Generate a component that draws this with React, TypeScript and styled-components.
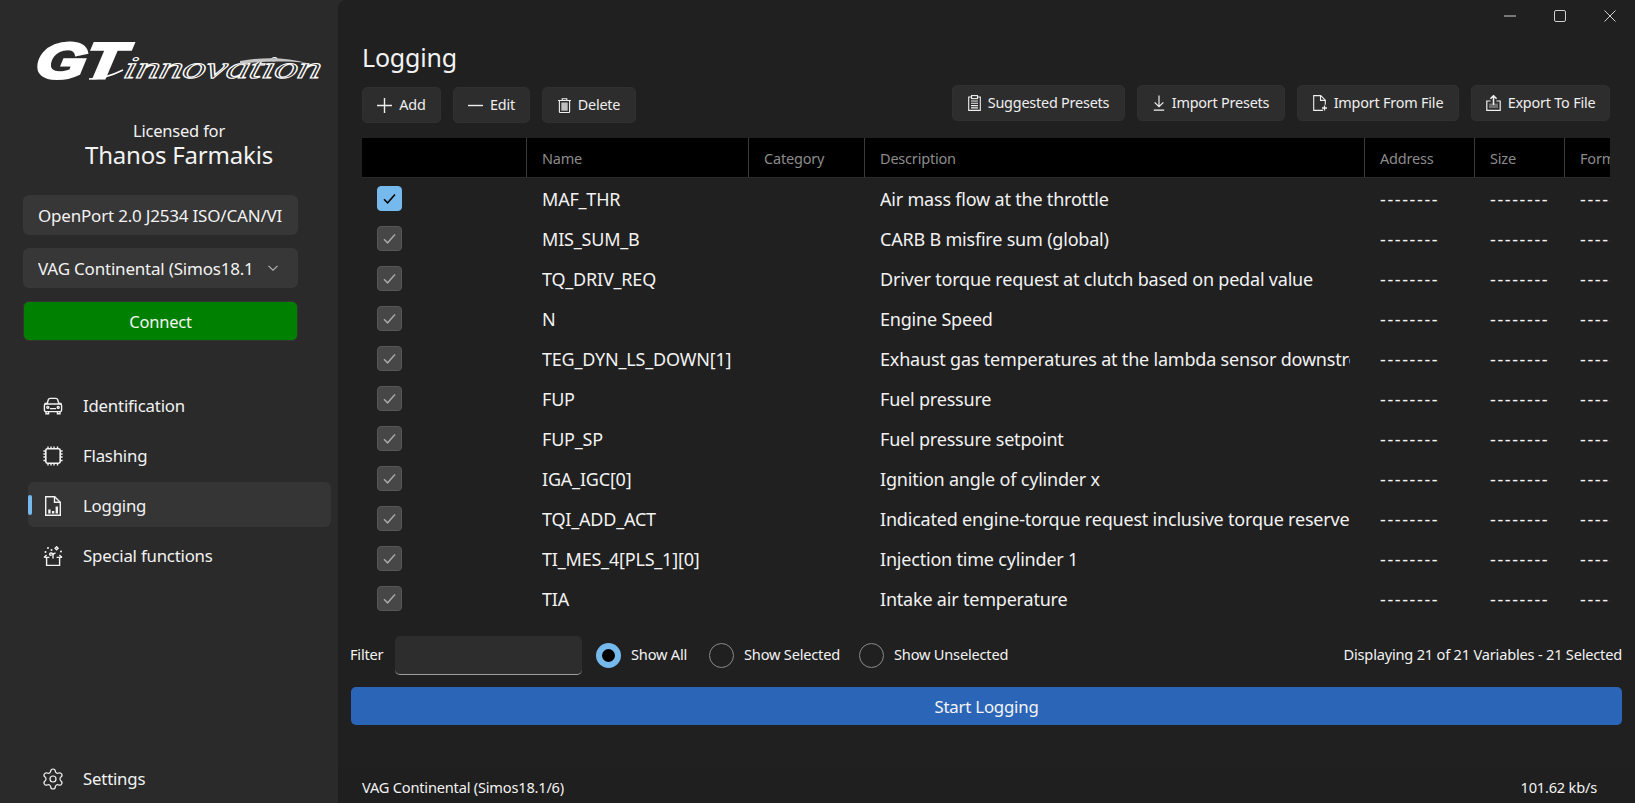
import React from 'react';
import styled, { createGlobalStyle } from 'styled-components';
import { Settings as GearIcon } from 'lucide-react';

const GlobalStyle = createGlobalStyle`
  html, body {
    margin: 0;
    padding: 0;
    height: 100%;
    background: #2a2a2a;
    overflow: hidden;
  }
  body {
    font-family: "Noto Sans", "Open Sans", "Liberation Sans", sans-serif;
    color: #f2f2f2;
    letter-spacing: -0.2px;
  }
  * { box-sizing: border-box; }
`;

const Shell = styled.div`
  display: flex;
  width: 1635px;
  height: 803px;
  background: #2a2a2a;
`;

const Sidebar = styled.aside`
  width: 338px;
  flex: none;
  display: flex;
  flex-direction: column;
  padding-top: 41px;
`;

const LogoBox = styled.div`
  margin-left: 37px;
  height: 40px;
  svg { display: block; overflow: visible; }
`;

const Licensed = styled.div`
  margin-top: 39px;
  text-align: center;
  font-size: 16.5px;
  line-height: 22px;
  padding-left: 20px;
`;

const Licensee = styled.div`
  text-align: center;
  font-size: 24px;
  line-height: 26px;
  padding-left: 20px;
  margin-bottom: 27px;
`;

const Combo = styled.div`
  margin: 0 40px 13px 23px;
  height: 40px;
  background: #373737;
  border-radius: 6px;
  display: flex;
  align-items: center;
  padding: 0 19px 0 15px;
  font-size: 17px;
  svg { flex: none; color: #b5b5b5; margin-left: auto; }
`;

const ComboText = styled.span<{ $width: number }>`
  width: ${p => p.$width}px;
  flex: none;
  overflow: hidden;
  white-space: nowrap;
`;

const ConnectButton = styled.button`
  margin: 0 40px 0 23px;
  height: 40px;
  background: #008000;
  border: 1px solid #333;
  border-radius: 6px;
  color: #f4f4f4;
  font: inherit;
  font-size: 16.5px;
  letter-spacing: inherit;
`;

const Nav = styled.nav`
  margin: 41px 7px 0 28px;
  display: flex;
  flex-direction: column;
  gap: 5px;
`;

const NavItem = styled.div<{ $active?: boolean }>`
  position: relative;
  height: 45px;
  display: flex;
  align-items: center;
  gap: 20px;
  padding: 2px 0 0 15px;
  border-radius: 6px;
  font-size: 16.8px;
  background: ${p => (p.$active ? '#353535' : 'transparent')};
  svg { flex: none; display: block; }
  &::before {
    content: '';
    display: ${p => (p.$active ? 'block' : 'none')};
    position: absolute;
    left: 0;
    top: 13px;
    width: 4px;
    height: 20px;
    border-radius: 2px;
    background: #76b9ed;
  }
`;

const SettingsNav = styled(Nav)`
  margin-top: auto;
  margin-bottom: 3px;
  svg { margin: 0 -2px; }
`;

const Main = styled.main`
  flex: 1;
  min-width: 0;
  display: flex;
  flex-direction: column;
  background: #202020;
  border-top-left-radius: 8px;
`;

const TitleBar = styled.div`
  height: 32px;
  flex: none;
  display: flex;
  justify-content: flex-end;
`;

const WindowButton = styled.div`
  width: 50px;
  display: flex;
  align-items: center;
  justify-content: center;
  color: #cfcfcf;
  svg { display: block; }
`;

const Content = styled.div`
  margin: 0 25px 0 24px;
`;

const PageTitle = styled.h1`
  margin: 7px 0 10px;
  font-size: 25px;
  font-weight: 400;
  line-height: 36px;
`;

const Toolbar = styled.div`
  display: flex;
  justify-content: space-between;
  height: 38px;
  margin-bottom: 15px;
`;

const ButtonGroup = styled.div<{ $end?: boolean }>`
  display: flex;
  gap: 12px;
  align-self: ${p => (p.$end ? 'flex-start' : 'flex-end')};
`;

const ToolButton = styled.button<{ $w: number }>`
  width: ${p => p.$w}px;
  height: 36px;
  display: flex;
  align-items: center;
  justify-content: center;
  gap: 7px;
  background: #2d2d2d;
  border: 1px solid #303030;
  border-radius: 5px;
  color: #efefef;
  font: inherit;
  font-size: 14.4px;
  letter-spacing: inherit;
  padding: 0 0 2px;
  svg { flex: none; display: block; margin-top: 2px; }
`;

const columns = '164px 222px 116px 500px 110px 90px 100px';

const TableFrame = styled.div`
  height: 482px;
  overflow: hidden;
`;

const HeaderRow = styled.div`
  display: grid;
  grid-template-columns: ${columns};
  height: 40px;
  background: #000;
  border-bottom: 1px solid #2b2b2b;
`;

const HeaderCell = styled.div`
  display: flex;
  align-items: center;
  padding-left: 15px;
  font-size: 14.5px;
  color: #8b8b8b;
  white-space: nowrap;
  overflow: hidden;
  & + & { border-left: 1px solid #3a3a3a; }
`;

const DataRow = styled.div`
  display: grid;
  grid-template-columns: ${columns};
  height: 40px;
  align-items: center;
`;

const Cell = styled.div<{ $dash?: boolean }>`
  margin: 0 14px 0 16px;
  padding-top: 2px;
  font-size: 18px;
  letter-spacing: ${p => (p.$dash ? '1.6px' : 'inherit')};
  white-space: nowrap;
  overflow: hidden;
`;

const CheckCell = styled.div`
  padding-left: 15px;
`;

const CheckBox = styled.div<{ $focus?: boolean }>`
  width: 25px;
  height: 25px;
  display: flex;
  align-items: center;
  justify-content: center;
  border-radius: 4px;
  background: ${p => (p.$focus ? '#76b9ed' : '#474747')};
  border: 1px solid ${p => (p.$focus ? '#76b9ed' : '#565656')};
  color: ${p => (p.$focus ? '#000' : '#a6a6a6')};
  svg { display: block; }
`;

const FilterRow = styled.div`
  display: flex;
  align-items: center;
  height: 39px;
  margin: 16px 13px 12px 12px;
  font-size: 14.6px;
`;

const FilterLabel = styled.label`
  width: 45px;
  flex: none;
  padding-bottom: 4px;
`;

const FilterInput = styled.div`
  width: 187px;
  height: 39px;
  flex: none;
  background: #2d2d2d;
  border-radius: 5px;
  border-bottom: 1px solid #a0a0a0;
  margin-right: 14px;
`;

const RadioOption = styled.div<{ $w: number }>`
  width: ${p => p.$w}px;
  flex: none;
  display: flex;
  align-items: center;
  gap: 10px;
  white-space: nowrap;
`;

const RadioDot = styled.span<{ $on?: boolean }>`
  width: 25px;
  height: 25px;
  flex: none;
  border-radius: 50%;
  background: ${p => (p.$on ? '#000' : 'transparent')};
  border: ${p => (p.$on ? '6px solid #76b9ed' : '1.5px solid #8a8a8a')};
`;

const OptionText = styled.span`
  padding-bottom: 4px;
`;

const Counter = styled.div`
  margin-left: auto;
  white-space: nowrap;
  padding-bottom: 4px;
`;

const StartButton = styled.button`
  display: block;
  width: calc(100% - 26px);
  height: 38px;
  margin: 0 13px 0 13px;
  background: #2b65b8;
  border: none;
  border-radius: 5px;
  color: #f4f4f4;
  font: inherit;
  font-size: 16.8px;
  letter-spacing: inherit;
`;

const StatusBar = styled.footer`
  margin-top: auto;
  height: 36px;
  flex: none;
  display: flex;
  align-items: center;
  justify-content: space-between;
  padding: 4px 38px 0 24px;
  background: #1f1f1f;
  font-size: 14.6px;
`;

const stroke = { fill: 'none', stroke: 'currentColor', strokeWidth: 1.4 };

const Logo = () => (
  <svg width="286" height="40" viewBox="0 0 286 40">
    <g transform="translate(-3 37) skewX(-10)">
      <text
        x="0"
        y="0"
        fontFamily="Liberation Sans"
        fontWeight="700"
        fontStyle="italic"
        fontSize="50"
        textLength="88"
        lengthAdjust="spacingAndGlyphs"
        fill="#fff"
        stroke="#fff"
        strokeWidth="3.2"
      >
        GT
      </text>
    </g>
    <path d="M52 38 C64 38 74 35 86 29" fill="none" stroke="#fff" strokeWidth="1.4" />
    <g transform="translate(85 37) skewX(-14)">
      <text
        x="0"
        y="0"
        fontFamily="Liberation Serif"
        fontStyle="italic"
        fontSize="31"
        textLength="197"
        lengthAdjust="spacingAndGlyphs"
        fill="#2a2a2a"
        stroke="#fff"
        strokeWidth="1"
      >
        innovation
      </text>
    </g>
    <path d="M203 20 C225 16 250 16 270 22 C250 20 225 20 203 23 Z" fill="#c4c4c4" />
  </svg>
);

const CarIcon = () => (
  <svg width="20" height="20" viewBox="0 0 20 20" {...stroke}>
    <path d="M4 8 5.4 3.6C5.7 2.8 6.3 2.4 7 2.4h6c.7 0 1.3.4 1.6 1.2L16 8" />
    <path d="M1.5 7.5H4M16 7.5h2.5" />
    <rect x="1.4" y="8" width="17.2" height="7.6" rx="1.6" />
    <path d="M3 15.6v2.2h2.6v-2.2M14.4 15.6v2.2H17v-2.2M7 12.6h6" />
    <circle cx="4.8" cy="11.4" r="1" />
    <circle cx="15.2" cy="11.4" r="1" />
  </svg>
);

const ChipIcon = () => (
  <svg width="20" height="20" viewBox="0 0 20 20" {...stroke}>
    <rect x="2.8" y="2.8" width="14.4" height="14.4" rx="1.6" strokeWidth="1.6" />
    <path d="M5 .4v2M8 .4v2M11 .4v2M14.5 .4v2M5 17.6v2M8 17.6v2M11 17.6v2M14.5 17.6v2M.4 5h2M.4 8h2M.4 11h2M.4 14.5h2M17.6 5h2M17.6 8h2M17.6 11h2M17.6 14.5h2" />
  </svg>
);

const ChartFileIcon = () => (
  <svg width="20" height="20" viewBox="0 0 20 20" {...stroke}>
    <path d="M2.7.7h9l5.6 5.6v13H2.7z" />
    <path d="M11.5.7v5.6h5.8" />
    <path d="M5.2 13.5h2.4v4H5.2zM8.9 15h2.4v2.5H8.9zM12.6 10.5H15v7h-2.4z" fill="currentColor" stroke="none" />
  </svg>
);

const MagicBoxIcon = () => (
  <svg width="20" height="20" viewBox="0 0 20 20" {...stroke}>
    <path d="M1 11.4 3.6 9M19 11.4 16.4 9M1 11.4h5.4M13.6 11.4H19M3.6 11.4v8h13v-8" />
    <path d="M10 12.5V9c0-1.4-1-2-2-2-1.2 0-1.7 1-1.2 1.8.5.7 1.6.6 1.9-.2M10 9c.5-1.2 1.6-2 2.6-1.6" />
    <path d="M13.6.8l1.5 1.5-1.5 1.5-1.5-1.5z" />
    <path d="M2.5 6v.1M5 2v.1M8.5 4v.1M18 5.5v.1" strokeWidth="2" strokeLinecap="round" />
  </svg>
);

const ChevronDownIcon = () => (
  <svg width="12" height="12" viewBox="0 0 12 12" fill="none" stroke="currentColor" strokeWidth="1.1">
    <path d="M1.5 3.8 6 8.2l4.5-4.4" />
  </svg>
);

const PlusIcon = () => (
  <svg width="15" height="15" viewBox="0 0 15 15" fill="none" stroke="currentColor" strokeWidth="1.4">
    <path d="M7.5 0v15M0 7.5h15" />
  </svg>
);

const MinusIcon = () => (
  <svg width="15" height="15" viewBox="0 0 15 15" fill="none" stroke="currentColor" strokeWidth="1.4">
    <path d="M0 7.5h15" />
  </svg>
);

const TrashIcon = () => (
  <svg width="13" height="15" viewBox="0 0 13 15" fill="none" stroke="currentColor" strokeWidth="1.1">
    <path d="M0 2.5h13M4.2 2.3V.7h4.6v1.6" />
    <path d="M1.4 2.5v11.2c0 .5.4.8.8.8h8.6c.4 0 .8-.3.8-.8V2.5" />
    <rect x="3.3" y="4.5" width="6.4" height="8.2" fill="currentColor" opacity="0.75" stroke="none" />
  </svg>
);

const ClipboardIcon = () => (
  <svg width="13" height="16" viewBox="0 0 13 16" fill="none" stroke="currentColor" strokeWidth="1.1">
    <path d="M3.5 2H.7v13.4h11.6V2H9.5" />
    <rect x="3.5" y=".6" width="6" height="3" />
    <path d="M3 6h7M3 8.3h7M3 10.6h7M3 12.9h7" />
  </svg>
);

const DownloadIcon = () => (
  <svg width="12" height="16" viewBox="0 0 12 16" fill="none" stroke="currentColor" strokeWidth="1.2">
    <path d="M6 .5v11M1.6 7.4 6 11.6l4.4-4.2M.8 15.2h10.4" />
  </svg>
);

const FileAddIcon = () => (
  <svg width="14" height="16" viewBox="0 0 14 16" fill="none" stroke="currentColor" strokeWidth="1.1">
    <path d="M10 15.4H.7V.6h7l4.6 4.6v4.6" />
    <path d="M7.5.6v4.8h4.8" />
    <path d="M11.5 10.5v5M9 13h5" strokeWidth="1.3" />
  </svg>
);

const ExportIcon = () => (
  <svg width="15" height="16" viewBox="0 0 15 16" fill="none" stroke="currentColor" strokeWidth="1.2">
    <path d="M4.6 6H.8v9.4h13.4V6h-3.8" />
    <path d="M7.5 10V1M4.4 3.8 7.5.8l3.1 3" strokeWidth="1.6" />
    <path d="M3 8.5h9v4.5H3z" fill="currentColor" opacity="0.35" stroke="none" />
  </svg>
);

const CheckIcon = () => (
  <svg width="13" height="13" viewBox="0 0 13 13" fill="none" stroke="currentColor" strokeWidth="1.5">
    <path d="M1 7.2 4.6 10.8 12 2.6" />
  </svg>
);

type Variable = { name: string; description: string };

const variables: Variable[] = [
  { name: 'MAF_THR', description: 'Air mass flow at the throttle' },
  { name: 'MIS_SUM_B', description: 'CARB B misfire sum (global)' },
  { name: 'TQ_DRIV_REQ', description: 'Driver torque request at clutch based on pedal value' },
  { name: 'N', description: 'Engine Speed' },
  { name: 'TEG_DYN_LS_DOWN[1]', description: 'Exhaust gas temperatures at the lambda sensor downstream' },
  { name: 'FUP', description: 'Fuel pressure' },
  { name: 'FUP_SP', description: 'Fuel pressure setpoint' },
  { name: 'IGA_IGC[0]', description: 'Ignition angle of cylinder x' },
  { name: 'TQI_ADD_ACT', description: 'Indicated engine-torque request inclusive torque reserve' },
  { name: 'TI_MES_4[PLS_1][0]', description: 'Injection time cylinder 1' },
  { name: 'TIA', description: 'Intake air temperature' },
];

const App: React.FC = () => {
  return (
    <>
      <GlobalStyle />
      <Shell>
        <Sidebar>
          <LogoBox>
            <Logo />
          </LogoBox>
          <Licensed>Licensed for</Licensed>
          <Licensee>Thanos Farmakis</Licensee>
          <Combo>
            <ComboText $width={246}>OpenPort 2.0 J2534 ISO/CAN/VI</ComboText>
          </Combo>
          <Combo>
            <ComboText $width={214}>VAG Continental (Simos18.1</ComboText>
            <ChevronDownIcon />
          </Combo>
          <ConnectButton>Connect</ConnectButton>
          <Nav>
            <NavItem><CarIcon />Identification</NavItem>
            <NavItem><ChipIcon />Flashing</NavItem>
            <NavItem $active><ChartFileIcon />Logging</NavItem>
            <NavItem><MagicBoxIcon />Special functions</NavItem>
          </Nav>
          <SettingsNav>
            <NavItem><GearIcon size={24} strokeWidth={1.2} />Settings</NavItem>
          </SettingsNav>
        </Sidebar>

        <Main>
          <TitleBar>
            <WindowButton>
              <svg width="12" height="12" viewBox="0 0 12 12" stroke="currentColor"><path d="M0 6h12" /></svg>
            </WindowButton>
            <WindowButton>
              <svg width="12" height="12" viewBox="0 0 12 12" fill="none" stroke="currentColor"><rect x=".5" y=".5" width="11" height="11" rx="1.5" /></svg>
            </WindowButton>
            <WindowButton>
              <svg width="12" height="12" viewBox="0 0 12 12" stroke="currentColor"><path d="M.5.5l11 11M11.5.5l-11 11" /></svg>
            </WindowButton>
          </TitleBar>

          <Content>
            <PageTitle>Logging</PageTitle>
            <Toolbar>
              <ButtonGroup>
                <ToolButton $w={79}><PlusIcon />Add</ToolButton>
                <ToolButton $w={77}><MinusIcon />Edit</ToolButton>
                <ToolButton $w={94}><TrashIcon />Delete</ToolButton>
              </ButtonGroup>
              <ButtonGroup $end>
                <ToolButton $w={173}><ClipboardIcon />Suggested Presets</ToolButton>
                <ToolButton $w={148}><DownloadIcon />Import Presets</ToolButton>
                <ToolButton $w={162}><FileAddIcon />Import From File</ToolButton>
                <ToolButton $w={139}><ExportIcon />Export To File</ToolButton>
              </ButtonGroup>
            </Toolbar>

            <TableFrame>
              <HeaderRow>
                <HeaderCell />
                <HeaderCell>Name</HeaderCell>
                <HeaderCell>Category</HeaderCell>
                <HeaderCell>Description</HeaderCell>
                <HeaderCell>Address</HeaderCell>
                <HeaderCell>Size</HeaderCell>
                <HeaderCell>Format</HeaderCell>
              </HeaderRow>
              {variables.map((v, i) => (
                <DataRow key={v.name}>
                  <CheckCell>
                    <CheckBox $focus={i === 0}><CheckIcon /></CheckBox>
                  </CheckCell>
                  <Cell>{v.name}</Cell>
                  <Cell />
                  <Cell>{v.description}</Cell>
                  <Cell $dash>--------</Cell>
                  <Cell $dash>--------</Cell>
                  <Cell $dash>--------</Cell>
                </DataRow>
              ))}
            </TableFrame>
          </Content>

          <FilterRow>
            <FilterLabel>Filter</FilterLabel>
            <FilterInput />
            <RadioOption $w={113}><RadioDot $on /><OptionText>Show All</OptionText></RadioOption>
            <RadioOption $w={150}><RadioDot /><OptionText>Show Selected</OptionText></RadioOption>
            <RadioOption $w={170}><RadioDot /><OptionText>Show Unselected</OptionText></RadioOption>
            <Counter>Displaying 21 of 21 Variables - 21 Selected</Counter>
          </FilterRow>

          <StartButton>Start Logging</StartButton>

          <StatusBar>
            <span>VAG Continental (Simos18.1/6)</span>
            <span>101.62 kb/s</span>
          </StatusBar>
        </Main>
      </Shell>
    </>
  );
};

export default App;
